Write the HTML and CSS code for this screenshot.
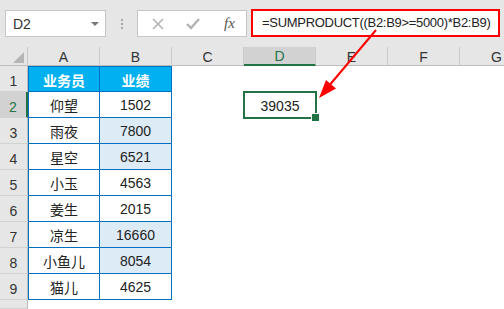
FILE: index.html
```html
<!DOCTYPE html>
<html lang="zh">
<head>
  <meta charset="UTF-8" />
  <title>SUMPRODUCT</title>
  <link rel="stylesheet" href="styles.css">
</head>
<body>
  <div class="toolbar">
    <div class="namebox"><span>D2</span><span class="caret"></span></div>
    <div class="grip"><i></i><i></i><i></i></div>
    <div class="fxbox">
      <svg class="ico" width="14" height="14" viewBox="0 0 14 14"><path d="M2 2 L12 12 M12 2 L2 12" stroke="#b3b3b3" stroke-width="1.6" fill="none"/></svg>
      <svg class="ico" width="16" height="14" viewBox="0 0 16 14"><path d="M2 7 L6 11 L14 2" stroke="#b3b3b3" stroke-width="2.4" fill="none"/></svg>
      <span class="fx">fx</span>
    </div>
    <div class="formula">=SUMPRODUCT((B2:B9&gt;=5000)*B2:B9)</div>
  </div>

  <div class="sheet">
    <div class="row head">
      <div class="corner"></div>
      <div class="ch">A</div><div class="ch">B</div><div class="ch">C</div>
      <div class="ch sel">D</div><div class="ch">E</div><div class="ch">F</div><div class="ch last">G</div>
    </div>
    <div class="row">
      <div class="rh">1</div>
      <div class="c t a top th">业务员</div><div class="c t top th">业绩</div>
      <div class="c"></div><div class="c"></div><div class="c"></div><div class="c"></div><div class="c"></div>
    </div>
    <div class="row">
      <div class="rh sel">2</div>
      <div class="c t a">仰望</div><div class="c t">1502</div>
      <div class="c"></div><div class="c active">39035</div><div class="c"></div><div class="c"></div><div class="c"></div>
    </div>
    <div class="row">
      <div class="rh">3</div>
      <div class="c t a">雨夜</div><div class="c t hi">7800</div>
      <div class="c"></div><div class="c"></div><div class="c"></div><div class="c"></div><div class="c"></div>
    </div>
    <div class="row">
      <div class="rh">4</div>
      <div class="c t a">星空</div><div class="c t hi">6521</div>
      <div class="c"></div><div class="c"></div><div class="c"></div><div class="c"></div><div class="c"></div>
    </div>
    <div class="row">
      <div class="rh">5</div>
      <div class="c t a">小玉</div><div class="c t">4563</div>
      <div class="c"></div><div class="c"></div><div class="c"></div><div class="c"></div><div class="c"></div>
    </div>
    <div class="row">
      <div class="rh">6</div>
      <div class="c t a">姜生</div><div class="c t">2015</div>
      <div class="c"></div><div class="c"></div><div class="c"></div><div class="c"></div><div class="c"></div>
    </div>
    <div class="row">
      <div class="rh">7</div>
      <div class="c t a">凉生</div><div class="c t hi">16660</div>
      <div class="c"></div><div class="c"></div><div class="c"></div><div class="c"></div><div class="c"></div>
    </div>
    <div class="row">
      <div class="rh">8</div>
      <div class="c t a">小鱼儿</div><div class="c t hi">8054</div>
      <div class="c"></div><div class="c"></div><div class="c"></div><div class="c"></div><div class="c"></div>
    </div>
    <div class="row">
      <div class="rh">9</div>
      <div class="c t a">猫儿</div><div class="c t">4625</div>
      <div class="c"></div><div class="c"></div><div class="c"></div><div class="c"></div><div class="c"></div>
    </div>
    <div class="row stub">
      <div class="rh"></div>
    </div>
  </div>

  <svg class="arrow" width="504" height="309" viewBox="0 0 504 309">
    <line x1="376" y1="30" x2="328" y2="87" stroke="#ff0000" stroke-width="2"/>
    <polygon points="319,98 336,88.5 326,80" fill="#ff0000"/>
  </svg>
</body>
</html>
```

FILE: styles.css
```css
* {
  box-sizing: border-box;
}
body {
  margin: 0;
  width: 504px;
  height: 309px;
  overflow: hidden;
  background: #fff;
  font-family: "Liberation Sans", Arial, "Noto Sans CJK SC", sans-serif;
  font-size: 14px;
  color: #222;
  position: relative;
}

/* formula bar */
.toolbar {
  height: 47px;
  background: #e6e6e6;
  display: flex;
  align-items: flex-start;
  padding: 10px 0 0 5px;
}
.namebox {
  width: 101px;
  height: 27px;
  background: #fff;
  border: 1px solid #c6c6c6;
  display: flex;
  align-items: center;
  justify-content: space-between;
  padding: 0 6px 0 7px;
  color: #333;
}
.caret {
  width: 0;
  height: 0;
  border-left: 4px solid transparent;
  border-right: 4px solid transparent;
  border-top: 4px solid #777;
}
.grip {
  width: 31px;
  height: 27px;
  display: flex;
  flex-direction: column;
  align-items: center;
  justify-content: center;
  gap: 2px;
}
.grip i {
  width: 2px;
  height: 2px;
  background: #a6a6a6;
}
.fxbox {
  width: 110px;
  height: 27px;
  background: #fff;
  border: 1px solid #c6c6c6;
  display: flex;
  align-items: center;
  padding-left: 13px;
  gap: 20px;
}
.fx {
  font-family: "Liberation Serif", serif;
  font-style: italic;
  font-size: 15px;
  color: #555;
  margin-left: 3px;
}
.formula {
  width: 249px;
  height: 28px;
  margin: -1px 0 0 4px;
  background: #fff;
  border: 2px solid #ff0000;
  padding: 0 0 0 9px;
  line-height: 24px;
  color: #222;
  font-size: 13px;
  letter-spacing: -0.3px;
  white-space: nowrap;
  overflow: hidden;
}

/* sheet */
.row {
  display: grid;
  grid-template-columns: 28px repeat(6, 72px) 44px;
  height: 26px;
}
.row.head {
  height: 19px;
  background: #e6e6e6;
  border-bottom: 1px solid #bdbdbd;
}
.row.stub {
  height: 9px;
}
.corner {
  position: relative;
  border-right: 1px solid #c8c8c8;
}
.corner::after {
  content: "";
  position: absolute;
  right: 3px;
  bottom: 3px;
  border-left: 11px solid transparent;
  border-bottom: 11px solid #b5b5b5;
}
.ch {
  display: flex;
  align-items: center;
  justify-content: center;
  border-right: 1px solid #cacaca;
  color: #333;
  padding-top: 1px;
}
.ch.last {
  justify-content: flex-start;
  padding-left: 31px;
  border-right: 0;
}
.ch.sel {
  background: #d2d2d2;
  color: #217346;
  border-bottom: 2px solid #217346;
}
.rh {
  background: #e6e6e6;
  border-right: 1px solid #bdbdbd;
  border-bottom: 1px solid #d2d2d2;
  display: flex;
  align-items: flex-end;
  justify-content: center;
  padding-bottom: 2px;
  color: #333;
}
.rh.sel {
  background: #d2d2d2;
  color: #217346;
  border-right: 2px solid #217346;
}
.c {
  display: flex;
  align-items: center;
  justify-content: center;
  padding-top: 1px;
}
.c.t {
  border-right: 1px solid #0070c0;
  border-bottom: 1px solid #0070c0;
}
.c.a {
  border-left: 1px solid #0070c0;
}
.c.top {
  border-top: 1px solid #0070c0;
}
.c.th {
  background: #00b0f0;
  color: #fff;
  font-weight: bold;
}
.c.hi {
  background: #ddebf7;
}
.c.active {
  position: relative;
  outline: 2px solid #217346;
  outline-offset: -1px;
}
.c.active::after {
  content: "";
  position: absolute;
  right: -4px;
  bottom: -4px;
  width: 7px;
  height: 7px;
  background: #217346;
  border: 1px solid #fff;
}

.arrow {
  position: absolute;
  left: 0;
  top: 0;
  pointer-events: none;
}
```
